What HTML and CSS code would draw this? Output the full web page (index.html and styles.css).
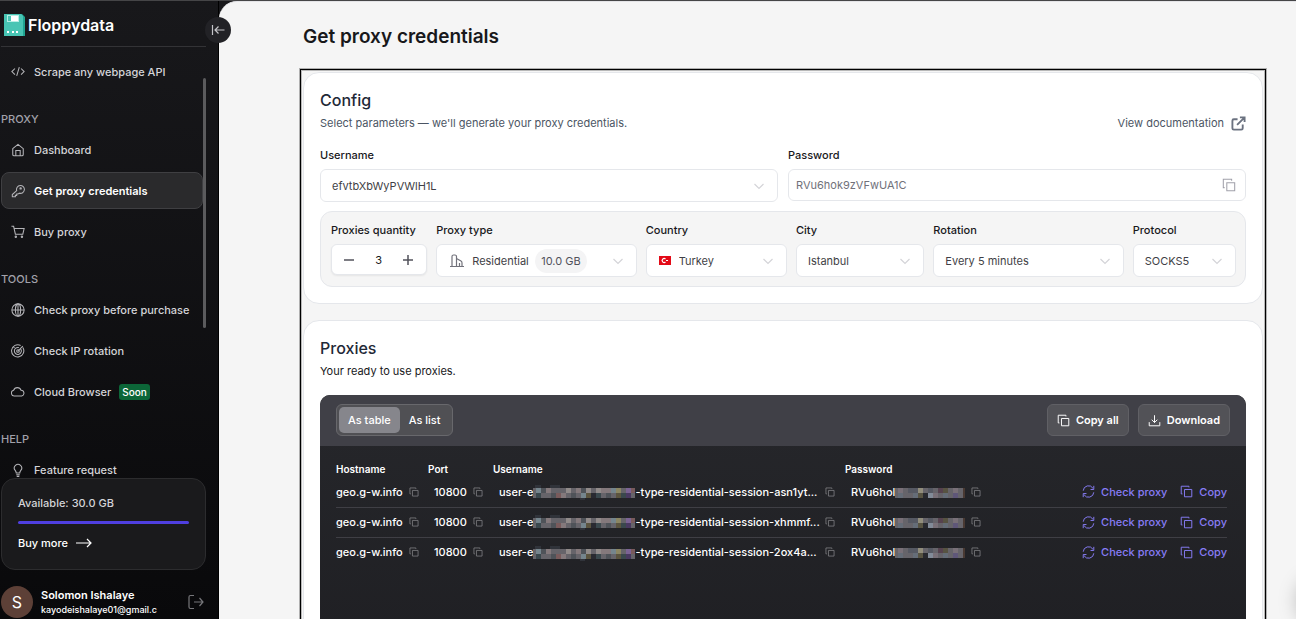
FILE: index.html
```html
<!DOCTYPE html>
<html lang="en">
<head>
	<meta charset="utf-8">
	<title>Get proxy credentials - Floppydata</title>
	<link rel="stylesheet" href="styles.css">
</head>
<body>
	<!-- shared icons -->
	<svg class="sprite">
		<symbol id="copy" viewBox="0 0 16 16"><path d="M5.500 5.500h9v9h-9zM3 11H1.500V1.500H11V3"/></symbol>
		<symbol id="chevron" viewBox="0 0 12 12"><path d="M1.500 4L6 8.500 10.500 4"/></symbol>
		<symbol id="refresh" viewBox="0 0 16 16"><path d="M1.500 7a6.500 6.500 0 0 1 12-3M14.500 1v4.500H10.500M14.500 9a6.500 6.500 0 0 1-12 3M1.500 15V10.500H5.500"/></symbol>
		<symbol id="hidden-user" viewBox="0 0 102 15">
			<path fill="#30333a" d="M2 0h6v5H2zM17 0h10v5H17zM47 15h5v-5h-5z"/>
			<path fill="#66646a" d="M0 3h102v10H0z"/>
			<path fill="#75858d" d="M3 3h5v5H3zM48 8h5v5h-5zM78 3h5v5h-5z"/>
			<path fill="#3a484d" d="M3 8h5v5H3zM63 8h5v5h-5zM88 8h5v5h-5z"/>
			<path fill="#84797c" d="M13 3h5v5h-5zM28 8h5v5h-5zM43 3h5v5h-5zM68 3h10v5H68z"/>
			<path fill="#4f5359" d="M8 3h5v5H8zM18 8h5v5h-5zM38 8h5v5h-5zM48 3h5v5h-5zM73 8h5v5h-5z"/>
			<path fill="#918b8a" d="M33 3h5v5h-5zM53 3h5v5h-5zM63 3h5v5h-5z"/>
			<path fill="#292a31" d="M58 8h5v5h-5z"/>
			<path fill="#8b8663" d="M83 3h5v5h-5z"/>
			<path fill="#5b543f" d="M53 8h5v5h-5zM83 8h5v5h-5z"/>
			<path fill="#7b6394" d="M93 3h5v5h-5z"/>
			<path fill="#493960" d="M93 8h5v5h-5z"/>
			<path fill="#795b5c" d="M98 3h4v5h-4zM23 8h5v5h-5z"/>
		</symbol>
		<symbol id="hidden-pass" viewBox="0 0 70 10">
			<path fill="#66646a" d="M0 0h70v10H0z"/>
			<path fill="#797078" d="M3 0h5v5H3zM38 5h5v5h-5zM58 0h5v5h-5z"/>
			<path fill="#656d78" d="M3 5h5v5H3zM18 5h5v5h-5zM48 5h5v5h-5z"/>
			<path fill="#565963" d="M13 0h10v5H13zM33 0h5v5h-5z"/>
			<path fill="#918d7c" d="M23 0h5v5h-5z"/>
			<path fill="#575342" d="M23 5h5v5h-5zM48 0h5v5h-5z"/>
			<path fill="#28292f" d="M28 5h5v5h-5z"/>
			<path fill="#828b98" d="M33 5h5v5h-5z"/>
			<path fill="#56424f" d="M43 0h5v5h-5z"/>
			<path fill="#5f5779" d="M58 5h5v5h-5z"/>
			<path fill="#493932" d="M68 0h2v10h-2z"/>
		</symbol>
	</svg>

	<aside class="sidebar">
		<div class="brand">
			<svg class="logo" viewBox="0 0 21 22">
				<path fill="#20a492" d="M14 0h4l3 3v19h-7z"/>
				<path fill="#48c5b4" d="M0 0h17l2 2v20H0z"/>
				<path fill="#b6eee5" d="M3 1h12v7H3z"/>
				<path fill="#48c5b4" d="M4 2h3v5H4z"/>
				<path fill="#fff" d="M7 2h7v5H7z"/>
				<path fill="#fff" d="M3 17h2v2H3zM8 17h2v2H8zM12 17h2v2h-2z"/>
			</svg>
			<span>Floppydata</span>
		</div>
		<nav class="menu">
			<a href="#" class="item"><svg class="icon" viewBox="0 0 16 16"><path d="M4.500 4L1 7.500 4.500 11M11.500 4L15 7.500 11.500 11M9.500 2.500l-3 10"/></svg>Scrape any webpage API</a>
			<h3>PROXY</h3>
			<a href="#" class="item"><svg class="icon" viewBox="0 0 16 16"><path d="M2 6.500L8 1.500l6 5V13q0 1.500-1.500 1.500h-9Q2 14.500 2 13zM5.500 14.500V8.500h5v6"/></svg>Dashboard</a>
			<a href="#" class="item active"><svg class="icon" viewBox="0 0 16 16"><path d="M6.500 7.500a4.500 4.500 0 1 1 3 3L8 11.500H6.500V13H5v1.500H1.500V12z"/><circle cx="11" cy="5" r="0.800"/></svg>Get proxy credentials</a>
			<a href="#" class="item"><svg class="icon" viewBox="0 0 16 16"><path d="M0.500 1.500H3L5 10.500h8.500L15 4H3.600"/><circle cx="5.500" cy="13.500" r="0.800"/><circle cx="12.500" cy="13.500" r="0.800"/></svg>Buy proxy</a>
			<h3>TOOLS</h3>
			<a href="#" class="item"><svg class="icon" viewBox="0 0 16 16"><circle cx="8" cy="8" r="7"/><ellipse cx="8" cy="8" rx="3" ry="7"/><path d="M1 8h14M8 1v14"/></svg>Check proxy before purchase</a>
			<a href="#" class="item"><svg class="icon" viewBox="0 0 16 16"><path d="M13.500 4A7 7 0 1 1 11 1.700M11 5.500A4 4 0 1 1 9 4.100M8 8l5.500-5.500M3 3.500l1 1"/><circle cx="8" cy="8" r="1.500"/></svg>Check IP rotation</a>
			<a href="#" class="item"><svg class="icon" viewBox="0 0 16 16"><path d="M4 12.500A3.300 3.300 0 0 1 3 6 4.500 4.500 0 0 1 11.500 6a3.300 3.300 0 0 1 .8 6.500z"/></svg>Cloud Browser <span class="soon">Soon</span></a>
			<h3>HELP</h3>
			<a href="#" class="item"><svg class="icon" viewBox="0 0 16 16"><path d="M6 11.500q0-1.500-1.200-3a4.200 4.200 0 1 1 6.400 0Q10 10 10 11.500zM6 13.500h4M6.500 15.300h3"/></svg>Feature request</a>
		</nav>
		<div class="balance">
			<div>Available: 30.0 GB</div>
			<div class="bar"></div>
			<a href="#">Buy more <svg viewBox="0 0 16 10"><path d="M0 5h15M11 1l4 4-4 4"/></svg></a>
		</div>
		<div class="user">
			<div class="avatar">S</div>
			<div class="who">
				<b>Solomon Ishalaye</b>
				<span>kayodeishalaye01@gmail.c</span>
			</div>
			<button class="logout" aria-label="Log out"><svg viewBox="0 0 16 16"><path d="M6 1.500H2.500Q1 1.500 1 3v10q0 1.500 1.500 1.500H6M6 8h9M11.500 4L15 8l-3.500 4"/></svg></button>
		</div>
		<button class="collapse" aria-label="Collapse menu"><svg viewBox="0 0 14 14"><path d="M1.500 2v10M4 7h9.500M7.500 3.500L4 7l3.500 3.500"/></svg></button>
	</aside>

	<main class="page">
		<h1>Get proxy credentials</h1>
		<div class="frame">
			<section class="card">
				<div class="card-head">
					<div>
						<h2>Config</h2>
						<p>Select parameters — we'll generate your proxy credentials.</p>
					</div>
					<a href="#">View documentation <svg viewBox="0 0 16 16"><path d="M7 3.500H3Q1.500 3.500 1.500 5v8q0 1.500 1.500 1.500h8q1.500 0 1.500-1.500V9M6.500 9.500L14 2M9.500 1.500H14.500V6.500"/></svg></a>
				</div>
				<div class="access">
					<div class="field">
						<label for="login">Username</label>
						<div class="box">
							<select id="login"><option>efvtbXbWyPVWlH1L</option></select>
							<svg class="chev"><use href="#chevron"/></svg>
						</div>
					</div>
					<div class="field">
						<label for="pass">Password</label>
						<div class="box pass">
							<input id="pass" type="text" value="RVu6hok9zVFwUA1C">
							<svg class="copy-big"><use href="#copy"/></svg>
						</div>
					</div>
				</div>
				<div class="params">
					<div class="field">
						<label for="qty">Proxies quantity</label>
						<div class="box qty">
							<button aria-label="Less"><svg viewBox="0 0 12 12"><path d="M1 6h10"/></svg></button>
							<input id="qty" type="text" value="3">
							<button aria-label="More"><svg viewBox="0 0 12 12"><path d="M1 6h10M6 1v10"/></svg></button>
						</div>
					</div>
					<div class="field">
						<label for="type">Proxy type</label>
						<div class="box type">
							<svg class="building" viewBox="0 0 14 14"><path d="M0 12.500h14M2 12.500V2.500Q2 1 3.500 1H5q1.500 0 1.500 1.500v10M6.500 4.500L11 7q1 .6 1 2v3.500M9.500 12.500V9"/></svg>
							<select id="type"><option>Residential</option></select>
							<span class="traffic">10.0 GB</span>
							<svg class="chev"><use href="#chevron"/></svg>
						</div>
					</div>
					<div class="field">
						<label for="country">Country</label>
						<div class="box country">
							<svg class="flag" viewBox="0 0 12 9"><path fill="#e30a17" d="M0 0h12v9H0z"/><path d="M6.500 3a2 2 0 1 0 0 3" fill="none" stroke="#fff"/><path fill="#fff" d="M7 4h2v1H7z"/></svg>
							<select id="country"><option>Turkey</option></select>
							<svg class="chev"><use href="#chevron"/></svg>
						</div>
					</div>
					<div class="field">
						<label for="city">City</label>
						<div class="box">
							<select id="city"><option>Istanbul</option></select>
							<svg class="chev"><use href="#chevron"/></svg>
						</div>
					</div>
					<div class="field">
						<label for="rotation">Rotation</label>
						<div class="box">
							<select id="rotation"><option>Every 5 minutes</option></select>
							<svg class="chev"><use href="#chevron"/></svg>
						</div>
					</div>
					<div class="field">
						<label for="protocol">Protocol</label>
						<div class="box">
							<select id="protocol"><option>SOCKS5</option></select>
							<svg class="chev"><use href="#chevron"/></svg>
						</div>
					</div>
				</div>
			</section>

			<section class="card">
				<h2>Proxies</h2>
				<p class="dark">Your ready to use proxies.</p>
				<div class="panel">
					<div class="toolbar">
						<div class="tabs">
							<button class="on">As table</button>
							<button>As list</button>
						</div>
						<button class="tool"><svg><use href="#copy"/></svg>Copy all</button>
						<button class="tool"><svg viewBox="0 0 16 16"><path d="M1.500 10v4.500h13V10M8 1.500v9M4.500 7L8 10.500 11.500 7"/></svg>Download</button>
					</div>
					<table>
						<thead>
							<tr>
								<th class="c-host">Hostname</th>
								<th class="c-port">Port</th>
								<th class="c-user">Username</th>
								<th>Password</th>
								<th class="c-act"></th>
							</tr>
						</thead>
						<tbody>
							<tr>
								<td><div class="cell">geo.g-w.info <svg><use href="#copy"/></svg></div></td>
								<td><div class="cell">10800 <svg><use href="#copy"/></svg></div></td>
								<td><div class="cell"><div class="name">user-e<svg class="mask-user"><use href="#hidden-user"/></svg>-type-residential-session-asn1yt...</div><svg><use href="#copy"/></svg></div></td>
								<td><div class="cell"><div>RVu6hol<svg class="mask-pass"><use href="#hidden-pass"/></svg></div><svg><use href="#copy"/></svg></div></td>
								<td><div class="actions"><a href="#"><svg><use href="#refresh"/></svg>Check proxy</a><a href="#"><svg><use href="#copy"/></svg>Copy</a></div></td>
							</tr>
							<tr>
								<td><div class="cell">geo.g-w.info <svg><use href="#copy"/></svg></div></td>
								<td><div class="cell">10800 <svg><use href="#copy"/></svg></div></td>
								<td><div class="cell"><div class="name">user-e<svg class="mask-user"><use href="#hidden-user"/></svg>-type-residential-session-xhmmf...</div><svg><use href="#copy"/></svg></div></td>
								<td><div class="cell"><div>RVu6hol<svg class="mask-pass"><use href="#hidden-pass"/></svg></div><svg><use href="#copy"/></svg></div></td>
								<td><div class="actions"><a href="#"><svg><use href="#refresh"/></svg>Check proxy</a><a href="#"><svg><use href="#copy"/></svg>Copy</a></div></td>
							</tr>
							<tr>
								<td><div class="cell">geo.g-w.info <svg><use href="#copy"/></svg></div></td>
								<td><div class="cell">10800 <svg><use href="#copy"/></svg></div></td>
								<td><div class="cell"><div class="name">user-e<svg class="mask-user"><use href="#hidden-user"/></svg>-type-residential-session-2ox4a...</div><svg><use href="#copy"/></svg></div></td>
								<td><div class="cell"><div>RVu6hol<svg class="mask-pass"><use href="#hidden-pass"/></svg></div><svg><use href="#copy"/></svg></div></td>
								<td><div class="actions"><a href="#"><svg><use href="#refresh"/></svg>Check proxy</a><a href="#"><svg><use href="#copy"/></svg>Copy</a></div></td>
							</tr>
						</tbody>
					</table>
				</div>
			</section>
		</div>
	</main>
	<div class="chat-glow"></div>
</body>
</html>
```
FILE: styles.css
```css
* {
	box-sizing: border-box;
}
body {
	margin: 0;
	height: 100vh;
	display: flex;
	overflow: hidden;
	border-top: 1px solid #454547;
	background: #18181b;
	font: 11px/16px Inter, sans-serif;
	color: #18181b;
}
h1, h2, h3, p {
	margin: 0;
}
a {
	color: inherit;
	text-decoration: none;
}
button, input, select {
	font: inherit;
	color: inherit;
	background: none;
	border: 0;
	padding: 0;
	margin: 0;
	min-width: 0;
}
select {
	appearance: none;
}
svg {
	fill: none;
	stroke: currentColor;
	stroke-width: 1.2;
	flex: none;
}
.sprite {
	position: absolute;
	width: 0;
	height: 0;
}

/* sidebar */
.sidebar {
	position: relative;
	width: 219px;
	flex: none;
	display: flex;
	flex-direction: column;
	padding: 0 12px 0 1px;
	border-right: 1px solid #000;
	background: linear-gradient(#18181b, #09090b);
	color: #d4d4d8;
	font-weight: 500;
}
.brand {
	height: 46px;
	flex: none;
	display: flex;
	align-items: center;
	gap: 3px;
	padding: 3px 0 0 3px;
	border-bottom: 1px solid #333336;
	font-size: 16px;
	font-weight: 600;
	color: #fff;
}
.logo {
	width: 21px;
	height: 22px;
	stroke: none;
}
.menu {
	position: relative;
	flex: 1;
	min-height: 0;
	overflow: hidden;
	display: flex;
	flex-direction: column;
	gap: 4px;
	padding: 6px 3px 0 0;
}
.menu::after {
	content: "";
	position: absolute;
	top: 31px;
	right: 0;
	width: 3px;
	height: 250px;
	border-radius: 2px;
	background: #5b5b5d;
}
.menu h3 {
	margin-top: 17px;
	font-size: 11px;
	font-weight: 500;
	color: #a1a1aa;
}
.item {
	height: 37px;
	flex: none;
	display: flex;
	align-items: center;
	padding-left: 9px;
	border: 1px solid transparent;
	border-radius: 8px;
}
.item.active {
	background: #2a2a2c;
	border-color: #3f3f42;
	color: #fff;
	font-weight: 600;
}
.icon {
	width: 14px;
	height: 14px;
	margin-right: 9px;
	color: #b4b4b8;
}
.soon {
	margin-left: 8px;
	padding: 0 3px;
	border-radius: 3px;
	background: #0c6638;
	color: #fff;
	font-size: 10px;
}
.balance {
	flex: none;
	height: 92px;
	padding: 16px;
	border: 1px solid #2c2c2e;
	border-radius: 14px;
	background: #1a1a1c;
}
.bar {
	height: 3px;
	margin: 10px 0 11px;
	border-radius: 2px;
	background: #4f3fe0;
}
.balance a {
	display: flex;
	align-items: center;
	gap: 8px;
	color: #fff;
}
.balance a svg {
	width: 16px;
	height: 10px;
}
.user {
	flex: none;
	display: flex;
	align-items: center;
	gap: 8px;
	padding: 16px 0 1px;
}
.avatar {
	width: 32px;
	height: 32px;
	border-radius: 50%;
	background: #5d4037;
	color: #fff;
	font-size: 16px;
	font-weight: 400;
	line-height: 32px;
	text-align: center;
}
.who {
	color: #fff;
	line-height: 14px;
}
.who b {
	display: block;
	font-weight: 600;
}
.who span {
	font-size: 9px;
}
.logout {
	margin: 0 2px 0 auto;
	height: 16px;
	color: #77777b;
}
.logout svg {
	width: 16px;
	height: 16px;
}
.collapse {
	position: absolute;
	top: 16px;
	right: -13px;
	width: 26px;
	height: 26px;
	border-radius: 50%;
	background: #222226;
	color: #c4c4c8;
}
.collapse svg {
	display: block;
	width: 14px;
	height: 14px;
	margin: 0 auto;
}

/* page */
.page {
	flex: 1;
	min-width: 0;
	overflow: hidden;
	padding: 24px 30px 0 81px;
	border-top: 1px solid #e4e4e7;
	border-radius: 18px 0 0 0;
	background: #f5f5f5;
}
h1 {
	margin-left: 3px;
	font-size: 19px;
	line-height: 22px;
	font-weight: 600;
}
h2 {
	font-size: 16px;
	line-height: 22px;
	font-weight: 500;
	color: #1f2937;
}
.frame {
	margin-top: 21px;
	padding: 2px;
	border: 1px solid #000;
	box-shadow: 0 0 0 1px #b0b0b0, inset 0 0 0 1px #b8b8b8;
}
.card {
	margin-bottom: 16px;
	padding: 16px;
	border: 1px solid #e5e7eb;
	border-radius: 16px;
	background: #fff;
}
.card-head {
	display: flex;
	justify-content: space-between;
	align-items: flex-end;
	color: #4b5563;
}
.card-head p, .card .dark {
	padding-top: 4px;
}
.card-head a {
	display: flex;
	align-items: center;
	gap: 7px;
}
.card-head a svg {
	width: 15px;
	height: 15px;
	stroke-width: 2;
	color: #6b7280;
}
.access {
	display: grid;
	grid-template-columns: 1fr 1fr;
	gap: 10px;
	margin: 16px 0 9px;
}
.field label {
	display: block;
	margin-bottom: 6px;
	font-weight: 500;
}
.box {
	height: 33px;
	display: flex;
	align-items: center;
	gap: 8px;
	padding: 0 12px 0 11px;
	border: 1px solid #e5e7eb;
	border-radius: 6px;
	background: #fff;
	color: #3f3f46;
}
.chev {
	width: 12px;
	height: 12px;
	margin-left: auto;
	color: #d4d4d8;
}
.pass {
	height: 32px;
	padding: 0 9px 0 7px;
	color: #71717a;
}
.pass input {
	flex: 1;
}
.copy-big {
	width: 14px;
	height: 14px;
	color: #a1a1aa;
}
.params {
	display: grid;
	grid-template-columns: 96fr 200fr 141fr 128fr 190fr 103fr;
	gap: 9px;
	padding: 10px 9px 9px 10px;
	border: 1px solid #e5e7eb;
	border-radius: 12px;
	background: #f5f5f5;
}
.qty {
	height: 31px;
	justify-content: space-between;
	box-shadow: 0 1px 2px #0001;
}
.qty input {
	width: 20px;
	text-align: center;
	color: #18181b;
}
.qty button, .qty svg {
	display: block;
	width: 12px;
	height: 12px;
	stroke-width: 1.5;
	color: #52525b;
}
.type {
	padding-left: 13px;
}
.country {
	padding-left: 12px;
}
.building {
	width: 14px;
	height: 14px;
	color: #71717a;
}
.traffic {
	margin-left: -2px;
	padding: 4px 6px;
	border-radius: 12px;
	background: #f4f4f5;
	color: #52525b;
}
.flag {
	width: 12px;
	height: 9px;
	stroke: none;
}

/* proxies */
.panel {
	min-height: 300px;
	margin-top: 16px;
	border-radius: 10px;
	overflow: hidden;
	background: linear-gradient(#26272b, #1e1e22);
	color: #fff;
	font-weight: 500;
}
.toolbar {
	display: flex;
	gap: 9px;
	height: 51px;
	padding: 9px 16px;
	background: #404047;
}
.tabs {
	display: flex;
	height: 32px;
	margin-right: auto;
	padding: 2px;
	border: 1px solid #68686c;
	border-radius: 6px;
	background: #505054;
}
.tabs button {
	padding: 0 9px;
	border-radius: 5px;
}
.tabs .on {
	background: #86868c;
}
.tool {
	display: flex;
	align-items: center;
	gap: 6px;
	height: 32px;
	padding: 0 9px;
	border: 1px solid #606065;
	border-radius: 6px;
	background: #525257;
	font-weight: 600;
}
.tool svg {
	width: 13px;
	height: 13px;
}
table {
	width: calc(100% - 35px);
	margin: 16px 19px 0 16px;
	table-layout: fixed;
	border-collapse: collapse;
}
th {
	height: 15px;
	padding: 0;
	font-size: 10px;
	line-height: 15px;
	font-weight: 600;
	text-align: left;
}
.c-host {
	width: 92px;
}
.c-port {
	width: 65px;
}
.c-user {
	width: 352px;
}
.c-act {
	width: 150px;
}
td {
	height: 30px;
	padding: 0 0 0 6px;
	white-space: nowrap;
}
td:first-child {
	padding-left: 0;
}
tbody tr + tr {
	border-top: 1px solid #3f3f45;
}
.cell {
	display: flex;
	align-items: center;
	gap: 6px;
}
.cell > svg {
	width: 10px;
	height: 10px;
	color: #85858a;
}
.name {
	width: 320px;
}
.mask-user {
	width: 102px;
	height: 15px;
	vertical-align: middle;
	stroke: none;
}
.mask-pass {
	width: 70px;
	height: 10px;
	vertical-align: middle;
	stroke: none;
}
.actions {
	display: flex;
	justify-content: flex-end;
	gap: 13px;
	color: #877cf5;
}
.actions a {
	display: flex;
	align-items: center;
	gap: 6px;
}
.actions svg {
	width: 13px;
	height: 13px;
}

/* shadow of the chat bubble parked past the edge */
.chat-glow {
	position: fixed;
	right: -50px;
	bottom: -6px;
	width: 48px;
	height: 48px;
	border-radius: 50%;
	box-shadow: 0 0 20px #0004;
}
```
